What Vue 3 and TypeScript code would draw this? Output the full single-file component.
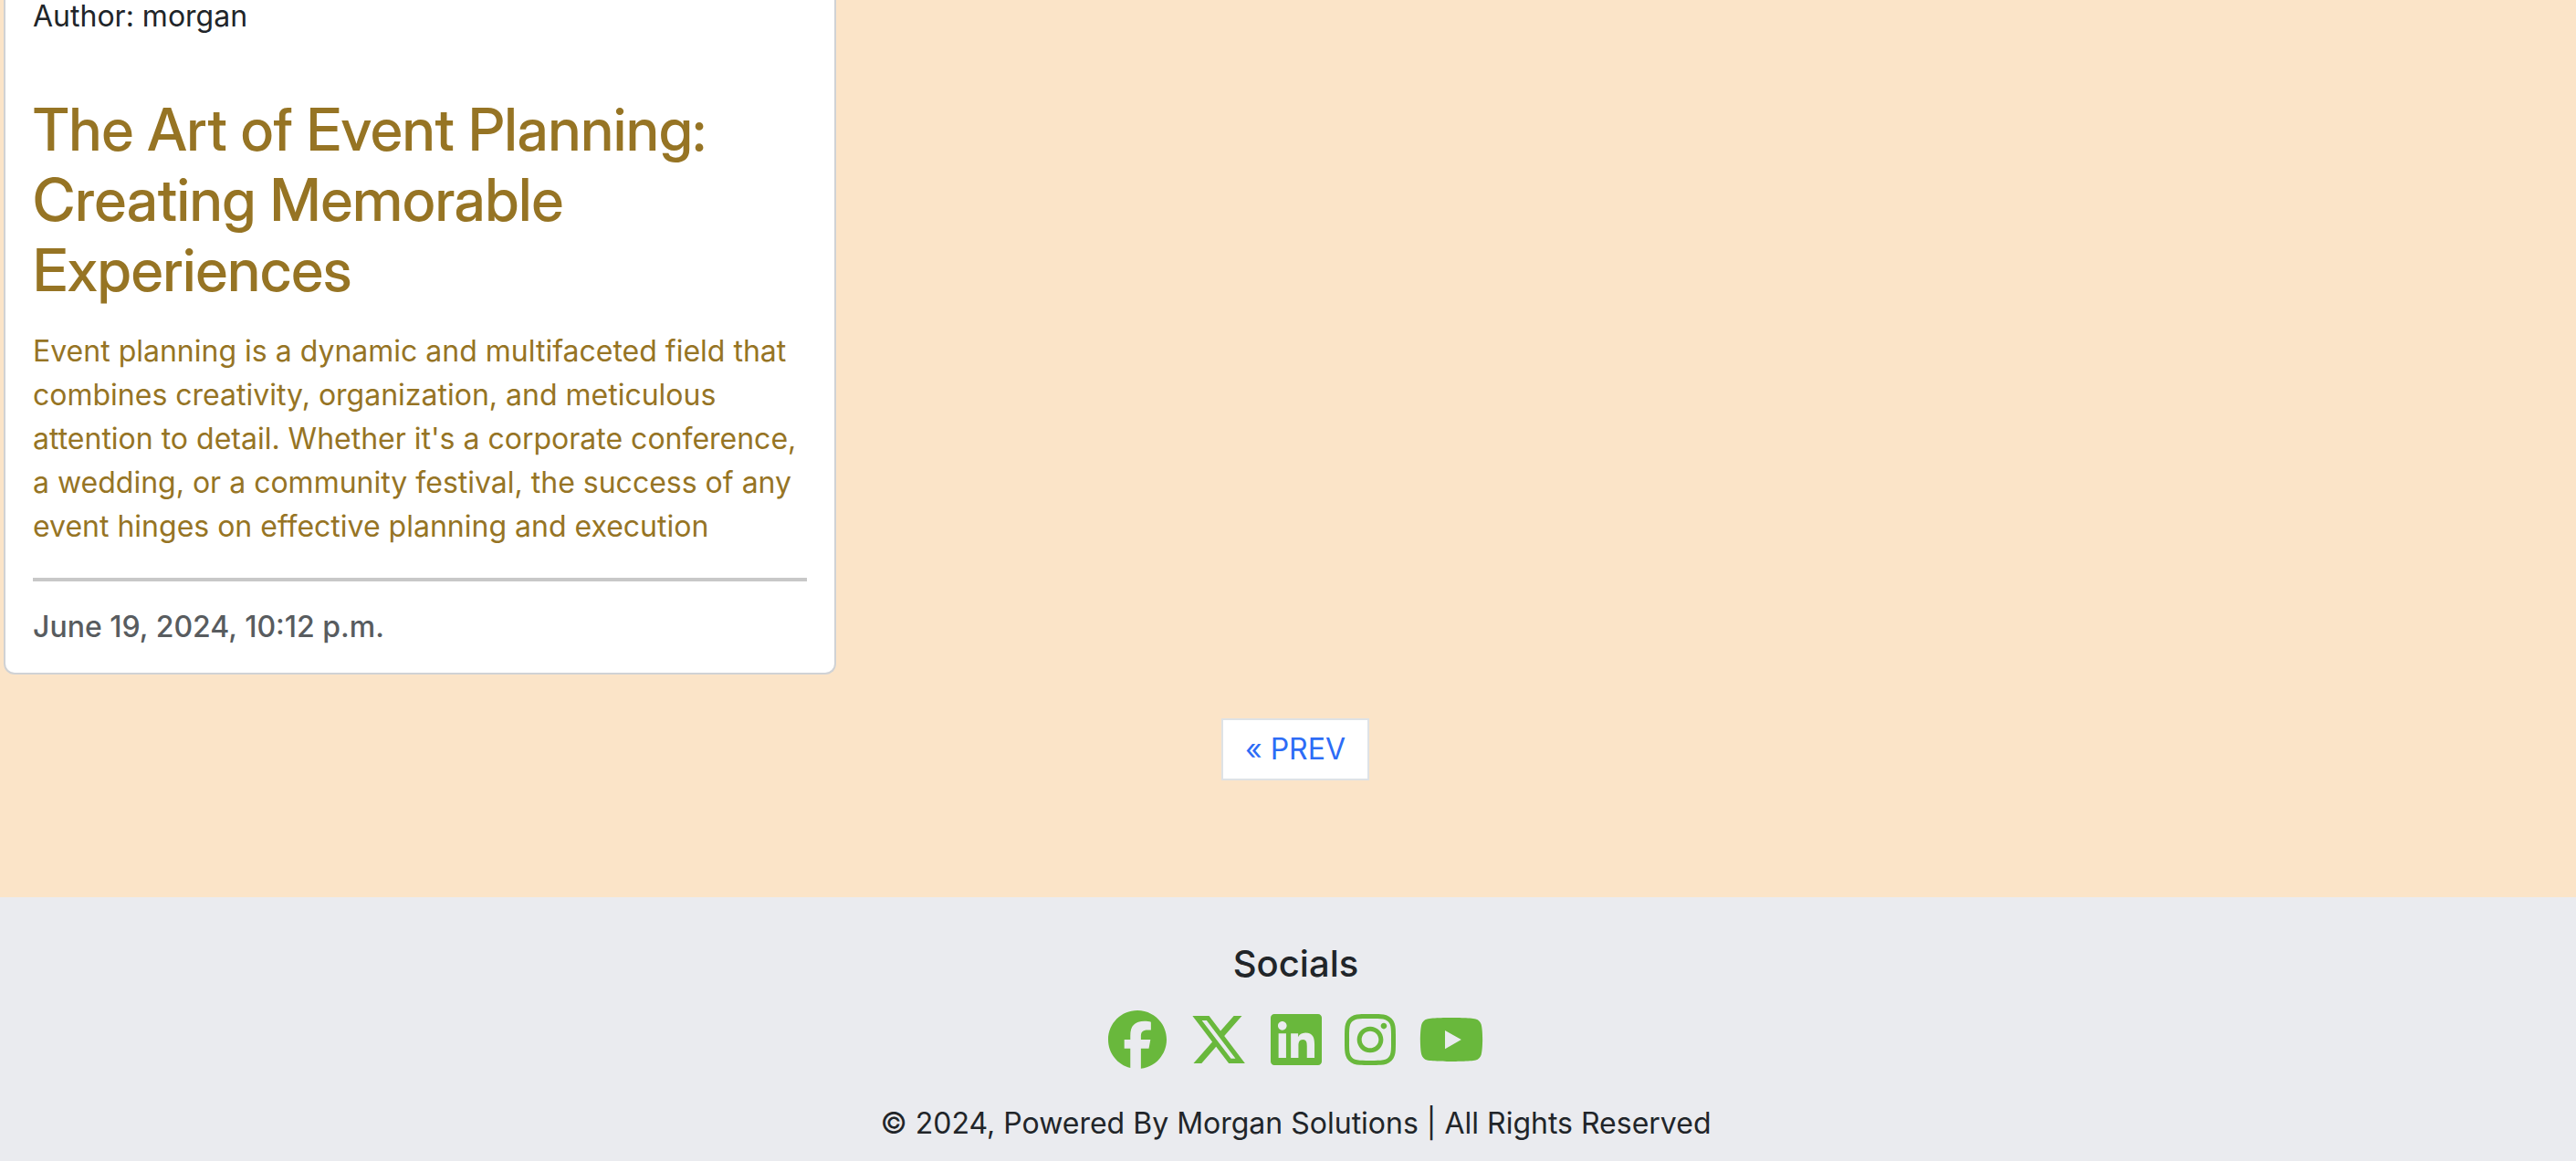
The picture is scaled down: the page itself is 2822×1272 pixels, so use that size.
<script setup lang="ts">
interface Social {
  name: string
  width: number
  path: string
}

const post = {
  author: 'morgan',
  title: 'The Art of Event Planning: Creating Memorable Experiences',
  excerpt:
    "Event planning is a dynamic and multifaceted field that combines creativity, organization, and meticulous attention to detail. Whether it's a corporate conference, a wedding, or a community festival, the success of any event hinges on effective planning and execution",
  published: 'June 19, 2024, 10:12 p.m.',
}

const socials: Social[] = [
  {
    name: 'Facebook',
    width: 512,
    path: 'M512 256C512 114.6 397.4 0 256 0S0 114.6 0 256C0 376 82.7 476.8 194.2 504.5V334.2H141.4V256h52.8V222.3c0-87.1 39.4-127.5 125-127.5c16.2 0 44.2 3.2 55.7 6.4V172c-6-.6-16.5-1-29.6-1c-42 0-58.2 15.9-58.2 57.2V256h83.6l-14.4 78.2H287V510.1C413.8 494.8 512 386.9 512 256z',
  },
  {
    name: 'X',
    width: 512,
    path: 'M389.2 48h70.6L305.6 224.2 487 464H345L233.7 318.6 106.5 464H35.8L200.7 275.5 26.8 48H172.4L272.9 180.9 389.2 48zM364.4 421.8h39.1L151.1 88h-42L364.4 421.8z',
  },
  {
    name: 'LinkedIn',
    width: 448,
    path: 'M416 32H31.9C14.3 32 0 46.5 0 64.3v383.4C0 465.5 14.3 480 31.9 480H416c17.6 0 32-14.5 32-32.3V64.3c0-17.8-14.4-32.3-32-32.3zM135.4 416H69V202.2h66.5V416zm-33.2-243c-21.3 0-38.5-17.3-38.5-38.5S80.9 96 102.2 96c21.2 0 38.5 17.3 38.5 38.5 0 21.3-17.2 38.5-38.5 38.5zm282.1 243h-66.4V312c0-24.8-.5-56.7-34.5-56.7-34.6 0-39.9 27-39.9 54.9V416h-66.4V202.2h63.7v29.2h.9c8.9-16.8 30.6-34.5 62.9-34.5 67.2 0 79.7 44.3 79.7 101.9V416z',
  },
  {
    name: 'Instagram',
    width: 448,
    path: 'M224.1 141c-63.6 0-114.9 51.3-114.9 114.9s51.3 114.9 114.9 114.9S339 319.5 339 255.9 287.7 141 224.1 141zm0 189.6c-41.1 0-74.7-33.5-74.7-74.7s33.5-74.7 74.7-74.7 74.7 33.5 74.7 74.7-33.6 74.7-74.7 74.7zm146.4-194.3c0 14.9-12 26.8-26.8 26.8-14.9 0-26.8-12-26.8-26.8s12-26.8 26.8-26.8 26.8 12 26.8 26.8zm76.1 27.2c-1.7-35.9-9.9-67.7-36.2-93.9-26.2-26.2-58-34.4-93.9-36.2-37-2.1-147.9-2.1-184.9 0-35.8 1.7-67.6 9.9-93.9 36.1s-34.4 58-36.2 93.9c-2.1 37-2.1 147.9 0 184.9 1.7 35.9 9.9 67.7 36.2 93.9s58 34.4 93.9 36.2c37 2.1 147.9 2.1 184.9 0 35.9-1.7 67.7-9.9 93.9-36.2 26.2-26.2 34.4-58 36.2-93.9 2.1-37 2.1-147.8 0-184.8zM398.8 388c-7.8 19.6-22.9 34.7-42.6 42.6-29.5 11.7-99.5 9-132.1 9s-102.7 2.6-132.1-9c-19.6-7.8-34.7-22.9-42.6-42.6-11.7-29.5-9-99.5-9-132.1s-2.6-102.7 9-132.1c7.8-19.6 22.9-34.7 42.6-42.6 29.5-11.7 99.5-9 132.1-9s102.7-2.6 132.1 9c19.6 7.8 34.7 22.9 42.6 42.6 11.7 29.5 9 99.5 9 132.1s2.7 102.7-9 132.1z',
  },
  {
    name: 'YouTube',
    width: 576,
    path: 'M549.655 124.083c-6.281-23.65-24.787-42.276-48.284-48.597C458.781 64 288 64 288 64S117.22 64 74.629 75.486c-23.497 6.322-42.003 24.947-48.284 48.597-11.412 42.867-11.412 132.305-11.412 132.305s0 89.438 11.412 132.305c6.281 23.65 24.787 41.5 48.284 47.821C117.22 448 288 448 288 448s170.78 0 213.371-11.486c23.497-6.321 42.003-24.171 48.284-47.821 11.412-42.867 11.412-132.305 11.412-132.305s0-89.438-11.412-132.305zm-317.51 213.508V175.185l142.739 81.205-142.739 81.201z',
  },
]
</script>

<template>
  <div class="page">
    <main class="feed">
      <article class="card">
        <p class="author">Author: {{ post.author }}</p>
        <a class="post-link" href="#">
          <h2 class="title">{{ post.title }}</h2>
          <p class="excerpt">{{ post.excerpt }}</p>
        </a>
        <hr class="divider" />
        <p class="date">{{ post.published }}</p>
      </article>
    </main>

    <nav class="pagination" aria-label="Pages">
      <a class="page-link" href="#">&laquo; PREV</a>
    </nav>

    <footer class="footer">
      <h5 class="footer-title">Socials</h5>
      <div class="socials">
        <a v-for="s in socials" :key="s.name" class="social" href="#" :aria-label="s.name">
          <svg class="icon" :viewBox="`0 0 ${s.width} 512`" aria-hidden="true">
            <path :d="s.path" />
          </svg>
        </a>
      </div>
      <p class="copyright">© 2024, Powered By Morgan Solutions | All Rights Reserved</p>
    </footer>
  </div>
</template>

<style>
body {
  margin: 0;
  background: #fbe4c8;
}
</style>

<style scoped>
.page {
  overflow: hidden;
  font-family: Inter, 'Liberation Sans', sans-serif;
  font-size: 32px;
  line-height: 48px;
  color: #212529;
}

.feed {
  display: grid;
  grid-template-columns: repeat(3, 1fr);
  gap: 36px;
  padding: 0 10px 0 4px;
}

.card {
  padding: 0 30px 26px;
  background: #fff;
  border: 2px solid #d0d2d5;
  border-top: 0;
  border-radius: 0 0 12px 12px;
}

.author,
.date,
.excerpt,
.copyright {
  margin: 0;
}

.author {
  line-height: 36px;
}

.post-link {
  display: block;
  margin-top: 67px;
  color: #967424;
  text-decoration: none;
}

.title {
  margin: 0 0 27px;
  font-family: 'Inter Display', Inter, 'Liberation Sans', sans-serif;
  font-size: 64px;
  line-height: 77px;
  font-weight: 500;
}

.divider {
  height: 4px;
  margin: 32px 0 26px;
  border: 0;
  background: #c8c8c8;
}

.date {
  font-weight: 500;
  color: #585c5f;
}

.pagination {
  display: flex;
  justify-content: center;
  padding: 48px 0 128px 16px;
}

.page-link {
  padding: 8px 24px;
  background: #fff;
  border: 2px solid #dee2e6;
  color: #2d6cf6;
  text-decoration: none;
}

.footer {
  display: flex;
  flex-direction: column;
  align-items: center;
  padding: 49px 0 17px 17px;
  background: #eaebef;
}

.footer-title {
  margin: 0;
  font-size: 40px;
  line-height: 48px;
  font-weight: 500;
}

.socials {
  display: flex;
  gap: 25px;
  margin: 27px 0 36px;
}

.social {
  display: block;
  color: #69b83c;
}

.icon {
  display: block;
  height: 64px;
  fill: currentColor;
}
</style>
